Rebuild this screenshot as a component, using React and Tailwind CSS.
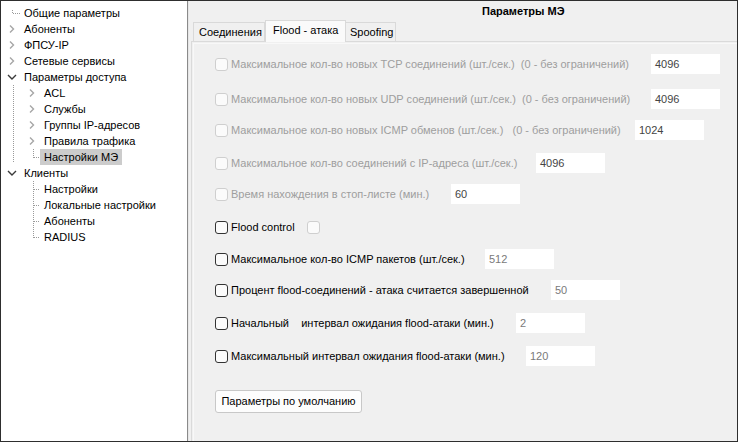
import React from "react";

const FONT = { fontFamily: '"Liberation Sans", Arial, sans-serif' };

function Dots({ x1, y1, x2, y2 }) {
  return (
    <line
      x1={x1}
      y1={y1}
      x2={x2}
      y2={y2}
      stroke="#9a9a9a"
      strokeWidth="1"
      strokeDasharray="1 1"
      shapeRendering="crispEdges"
    />
  );
}

function ChevRight({ x }) {
  return (
    <polyline
      points={`${x},4.5 ${x + 3.5},8 ${x},11.5`}
      fill="none"
      stroke="#a6a6a6"
      strokeWidth="1.4"
    />
  );
}

function ChevDown({ x }) {
  return (
    <polyline
      points={`${x},6 ${x + 4},10 ${x + 8},6`}
      fill="none"
      stroke="#3a3a3a"
      strokeWidth="1.4"
    />
  );
}

function Gutter({ width, children }) {
  return (
    <svg width={width} height="16" className="shrink-0 block">
      {children}
    </svg>
  );
}

function TreeRow({ kind, text, selected }) {
  let g;
  if (kind === "leaf0") {
    g = (
      <Gutter width={19}>
        <Dots x1={11.5} y1={5} x2={11.5} y2={9} />
        <Dots x1={12} y1={8.5} x2={19} y2={8.5} />
      </Gutter>
    );
  } else if (kind === "closed0") {
    g = (
      <Gutter width={19}>
        <ChevRight x={9} />
        <rect x={20} y={8} width={1} height={1} fill="#9a9a9a" />
      </Gutter>
    );
  } else if (kind === "open0") {
    g = (
      <Gutter width={19}>
        <ChevDown x={7} />
        <rect x={20} y={8} width={1} height={1} fill="#9a9a9a" />
      </Gutter>
    );
  } else if (kind === "closed1") {
    g = (
      <Gutter width={39}>
        <Dots x1={12.5} y1={0} x2={12.5} y2={16} />
        <ChevRight x={29} />
        <rect x={40} y={8} width={1} height={1} fill="#9a9a9a" />
      </Gutter>
    );
  } else if (kind === "leaf1last") {
    g = (
      <Gutter width={39}>
        <Dots x1={12.5} y1={0} x2={12.5} y2={14} />
        <Dots x1={32.5} y1={0} x2={32.5} y2={9} />
        <Dots x1={33} y1={8.5} x2={39} y2={8.5} />
      </Gutter>
    );
  } else if (kind === "leaf2") {
    g = (
      <Gutter width={39}>
        <Dots x1={32.5} y1={0} x2={32.5} y2={16} />
        <Dots x1={33} y1={8.5} x2={41} y2={8.5} />
      </Gutter>
    );
  } else if (kind === "leaf2last") {
    g = (
      <Gutter width={39}>
        <Dots x1={32.5} y1={0} x2={32.5} y2={9} />
        <Dots x1={33} y1={8.5} x2={41} y2={8.5} />
      </Gutter>
    );
  }
  return (
    <div className="flex h-4 items-center">
      {g}
      <span
        className={
          "h-4 leading-4 pl-[4px] pr-[4px] whitespace-nowrap text-[11px] text-black " +
          (selected ? "bg-[#cccccc]" : "")
        }
      >
        {text}
      </span>
    </div>
  );
}

function Check({ disabled, className = "" }) {
  return (
    <span
      className={
        "inline-block w-[13px] h-[13px] rounded-[3px] border bg-[#fbfbfb] shrink-0 " +
        (disabled ? "border-[#cfcfcf]" : "border-[#333333]") +
        " " +
        className
      }
    />
  );
}

function Row({ label, labelW, value, disabled, mt, valueDark }) {
  return (
    <div className={"flex h-5 items-center " + mt}>
      <Check disabled={disabled} />
      <span
        className={
          "pl-[3px] whitespace-pre text-[11px] shrink-0 " +
          (disabled ? "text-[#9e9e9e]" : "text-black")
        }
        style={{ width: labelW }}
      >
        {label}
      </span>
      <div
        className={
          "w-[69px] h-5 bg-white pl-[4px] text-[11px] leading-5 " +
          (valueDark ? "text-[#444444]" : "text-[#7a7a7a]")
        }
      >
        {value}
      </div>
    </div>
  );
}

export default function App() {
  return (
    <div
      className="w-[738px] h-[442px] border border-[#2e2e2e] flex bg-[#f0f0f0] overflow-hidden"
      style={FONT}
    >
      {/* Tree */}
      <div className="w-[187px] shrink-0 bg-white border-r border-[#8a8a8a] pt-[4px]">
        <TreeRow kind="leaf0" text="Общие параметры" />
        <TreeRow kind="closed0" text="Абоненты" />
        <TreeRow kind="closed0" text="ФПСУ-IP" />
        <TreeRow kind="closed0" text="Сетевые сервисы" />
        <TreeRow kind="open0" text="Параметры доступа" />
        <TreeRow kind="closed1" text="ACL" />
        <TreeRow kind="closed1" text="Службы" />
        <TreeRow kind="closed1" text="Группы IP-адресов" />
        <TreeRow kind="closed1" text="Правила трафика" />
        <TreeRow kind="leaf1last" text="Настройки МЭ" selected />
        <TreeRow kind="open0" text="Клиенты" />
        <TreeRow kind="leaf2" text="Настройки" />
        <TreeRow kind="leaf2" text="Локальные настройки" />
        <TreeRow kind="leaf2" text="Абоненты" />
        <TreeRow kind="leaf2last" text="RADIUS" />
      </div>

      {/* Right side */}
      <div className="flex-1 flex flex-col border-l border-[#e6e6e6] min-w-0">
        <div className="h-[19px] shrink-0 pl-[293px] pt-[4px] text-[11px] font-bold text-black leading-[13px]">
          Параметры МЭ
        </div>
        {/* Tabs */}
        <div className="h-[21px] shrink-0 flex items-end pl-[4px] relative z-10">
          <div className="h-[19px] w-[72px] border border-b-0 border-[#d9d9d9] bg-[#f0f0f0] text-[11px] text-black pl-[5px] leading-[19px] whitespace-nowrap">
            Соединения
          </div>
          <div className="h-[22px] w-[81px] -mb-[1px] border border-b-0 border-[#d9d9d9] bg-[#fafafa] text-[11px] text-black pl-[7px] pt-[2px] leading-[14px] whitespace-nowrap">
            Flood - атака
          </div>
          <div className="h-[19px] w-[50px] border border-b-0 border-l-0 border-[#d9d9d9] bg-[#f0f0f0] text-[11px] text-black pl-[4px] leading-[19px] whitespace-nowrap">
            Spoofing
          </div>
        </div>
        {/* Pane */}
        <div className="flex-1 ml-[2px] border-t border-l border-[#dadada] bg-[#f0f0f0] flex flex-col">
          <div className="flex-1 ml-[1px] mt-[1px] border-t border-l border-[#f8f8f8] flex flex-col pl-[21px]">
            <Row
              mt="mt-[10px]"
              disabled
              valueDark
              labelW="423px"
              label="Максимальное кол-во новых TCP соединений (шт./сек.)  (0 - без ограничений)"
              value="4096"
            />
            <Row
              mt="mt-[15px]"
              disabled
              valueDark
              labelW="423px"
              label="Максимальное кол-во новых UDP соединений (шт./сек.)  (0 - без ограничений)"
              value="4096"
            />
            <Row
              mt="mt-[11px]"
              disabled
              valueDark
              labelW="407px"
              label="Максимальное кол-во новых ICMP обменов (шт./сек.)   (0 - без ограничений)"
              value="1024"
            />
            <Row
              mt="mt-[13px]"
              disabled
              valueDark
              labelW="308px"
              label="Максимальное кол-во соединений с IP-адреса (шт./сек.)"
              value="4096"
            />
            <Row
              mt="mt-[11px]"
              disabled
              valueDark
              labelW="223px"
              label="Время нахождения в стоп-листе (мин.)"
              value="60"
            />
            <div className="flex h-5 items-center mt-[13px]">
              <Check />
              <span className="pl-[3px] text-[11px] text-black w-[79px]">Flood control</span>
              <Check disabled />
            </div>
            <Row
              mt="mt-[12px]"
              labelW="257px"
              label="Максимальное кол-во ICMP пакетов (шт./сек.)"
              value="512"
            />
            <Row
              mt="mt-[11px]"
              labelW="323px"
              label="Процент flood-соединений - атака считается завершенной"
              value="50"
            />
            <Row
              mt="mt-[13px]"
              labelW="288px"
              label="Начальный    интервал ожидания flood-атаки (мин.)"
              value="2"
            />
            <Row
              mt="mt-[13px]"
              labelW="298px"
              label="Максимальный интервал ожидания flood-атаки (мин.)"
              value="120"
            />
            <div className="mt-[22px]">
              <button className="h-[23px] w-[147px] bg-[#fdfdfd] border border-[#c8c8c8] rounded-[3px] text-[11px] text-black leading-[20px] whitespace-nowrap">
                Параметры по умолчанию
              </button>
            </div>
          </div>
        </div>
      </div>
    </div>
  );
}
